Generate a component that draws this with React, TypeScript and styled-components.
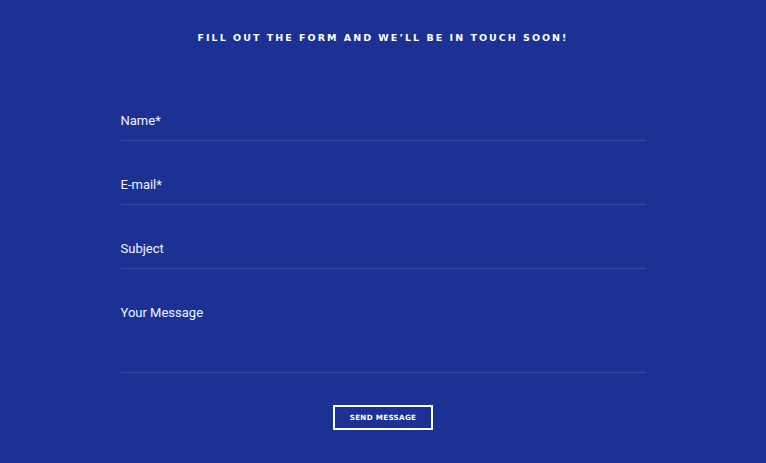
import React from "react";
import styled, { createGlobalStyle } from "styled-components";

const Global = createGlobalStyle`
  html, body { margin: 0; padding: 0; background: #1b3194; }
  * { box-sizing: border-box; }
`;

const Page = styled.div`
  width: 766px;
  height: 463px;
  background: #1b3194;
  padding-top: 31px;
  display: flex;
  flex-direction: column;
  align-items: center;
  font-family: Roboto, "Liberation Sans", sans-serif;
  color: #fff;
`;

const Heading = styled.h2`
  margin: 0;
  font-family: "DejaVu Sans", "Liberation Sans", sans-serif;
  font-weight: 700;
  font-size: 9.5px;
  line-height: 14px;
  letter-spacing: 2.02px;
  text-transform: uppercase;
  color: #fff;
`;

const Form = styled.form`
  width: 525px;
  margin-top: 32px;
  display: flex;
  flex-direction: column;
  align-items: stretch;
`;

const Field = styled.div<{ $tall?: boolean }>`
  height: ${(p) => (p.$tall ? 104 : 64)}px;
  padding-top: 36px;
  border-bottom: 1px solid rgba(255, 255, 255, 0.13);
`;

const Label = styled.label`
  display: block;
  font-size: 13px;
  line-height: 16px;
  color: #f2f4ff;
`;

const Actions = styled.div`
  display: flex;
  justify-content: center;
  margin-top: 32px;
`;

const Button = styled.button`
  width: 100px;
  height: 25px;
  background: transparent;
  border: 2px solid #fff;
  color: #fff;
  font-family: "DejaVu Sans", "Liberation Sans", sans-serif;
  font-weight: 700;
  font-size: 7.2px;
  letter-spacing: 0.3px;
  text-transform: uppercase;
  padding: 0;
  cursor: pointer;
`;

export default function App() {
  const fields = ["Name*", "E-mail*", "Subject"];
  return (
    <>
      <Global />
      <Page>
        <Heading>Fill out the form and we’ll be in touch soon!</Heading>
        <Form onSubmit={(e) => e.preventDefault()}>
          {fields.map((f) => (
            <Field key={f}>
              <Label>{f}</Label>
            </Field>
          ))}
          <Field $tall>
            <Label>Your Message</Label>
          </Field>
          <Actions>
            <Button type="submit">Send Message</Button>
          </Actions>
        </Form>
      </Page>
    </>
  );
}
